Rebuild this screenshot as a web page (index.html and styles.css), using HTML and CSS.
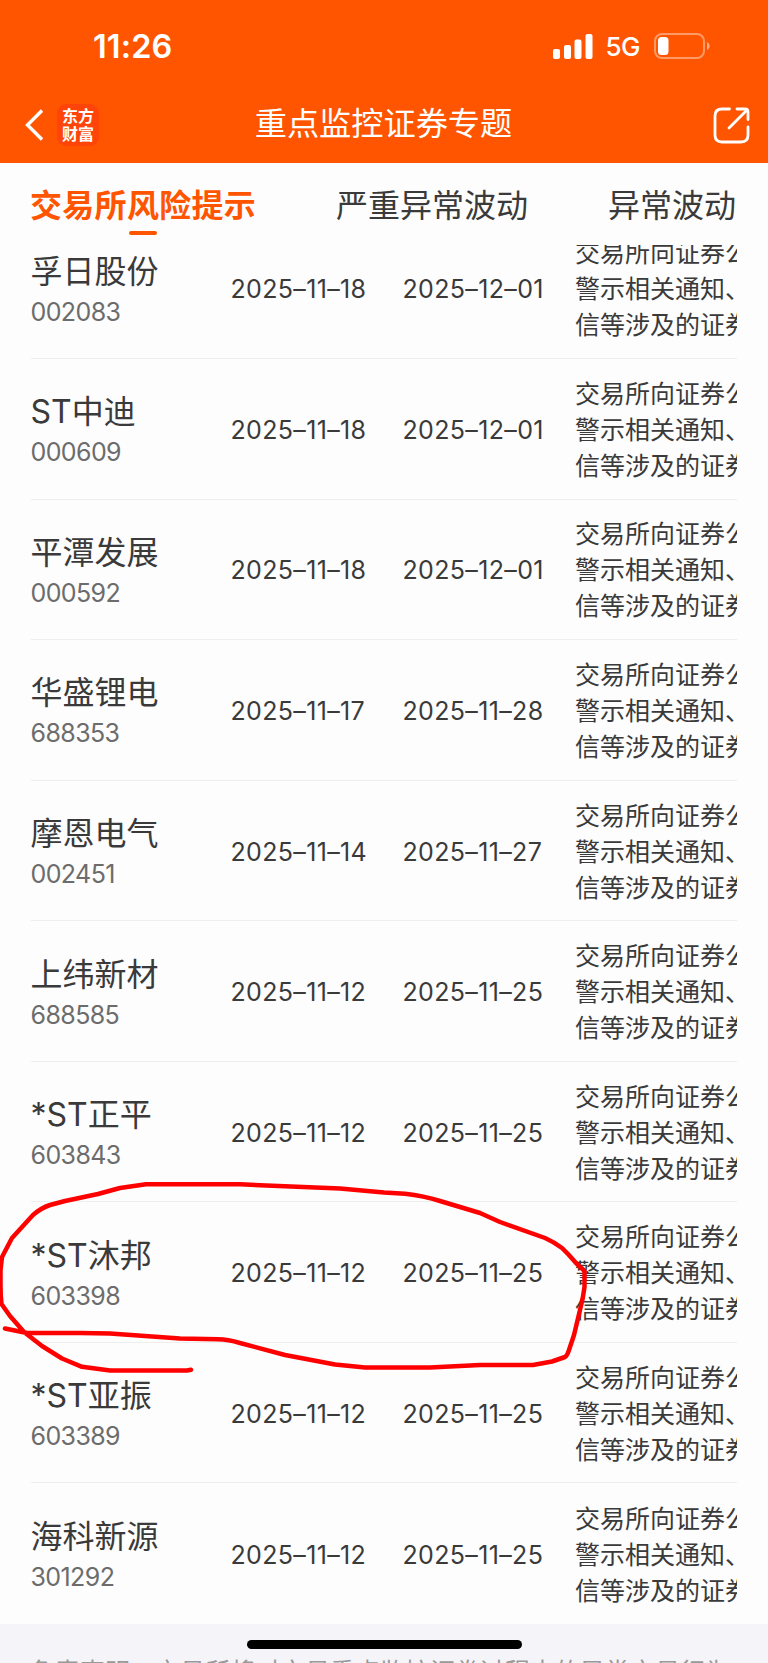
FILE: index.html
```
<!DOCTYPE html>
<html lang="zh-CN">
<head>
  <meta charset="UTF-8" />
  <meta name="viewport" content="width=device-width, initial-scale=1.0"/>
  <title>重点监控证券专题</title>
  <link rel="stylesheet" href="styles.css">
</head>
<body>
  <header class="header">
    <div class="status-bar">
      <span class="time">11:26</span>
      <div class="status-icons">
        <svg class="signal" width="40" height="25" viewBox="0 0 40 25" fill="#fff">
          <rect x="0" y="15" width="7" height="10" rx="2"/>
          <rect x="11" y="11" width="7" height="14" rx="2"/>
          <rect x="21.5" y="5.5" width="7" height="19.5" rx="2"/>
          <rect x="32.5" y="0" width="7" height="25" rx="2"/>
        </svg>
        <span class="network">5G</span>
        <svg class="battery" width="56" height="26" viewBox="0 0 56 26">
          <rect x="1" y="1" width="49" height="24" rx="7" fill="none" stroke="#fff" stroke-opacity=".4" stroke-width="2"/>
          <rect x="4" y="4" width="10.5" height="18" rx="3.5" fill="#fff"/>
          <path d="M53 9 C56.500 10.500 56.500 15.500 53 17 Z" fill="#fff" fill-opacity=".5"/>
        </svg>
      </div>
    </div>
    <div class="nav-bar">
      <div class="nav-left">
        <svg width="18" height="32" viewBox="0 0 18 32" fill="none" stroke="#fff" stroke-width="3.4">
          <path d="M17 1.500 L2.500 16 L17 30.500"/>
        </svg>
        <div class="logo"><span>东方</span><span>财富</span></div>
      </div>
      <h1>重点监控证券专题</h1>
      <svg class="share" width="37" height="37" viewBox="0 0 37 37" fill="none" stroke="#fff" stroke-width="2.800" stroke-linecap="round" stroke-linejoin="round">
        <path d="M16.500 2 H9 Q2 2 2 9 V28 Q2 35 9 35 H28 Q35 35 35 28 V20"/>
        <path d="M24 2 H32 Q35 2 35 5 V12.500"/>
        <path d="M16 21 L33.500 3.500"/>
      </svg>
    </div>
  </header>

  <nav class="tabs">
    <div class="tab active">交易所风险提示</div>
    <div class="tab">严重异常波动</div>
    <div class="tab">异常波动</div>
  </nav>

  <main class="list">
    <div class="rows" id="rows"></div>
  </main>

  <footer class="footer">
    <p>免责声明：交易所将对交易重点监控证券过程中的异常交易行为</p>
    <div class="home-indicator"></div>
  </footer>

  <svg class="marker" width="768" height="1663" viewBox="0 0 768 1663">
    <path d="M191 1369.700 L187 1370.500 H110 L82 1366.800 L62 1358.500 L42 1346 L24 1332 L10 1316 L1.500 1304 Q.5 1295 .5 1285 V1270 L2 1257 L12 1238 L33 1215 Q41 1208 50 1205 L65 1201 L98 1194 L120 1188 L146 1184.300 H240 L340 1188.500 L384 1192.500 L405 1193.800 Q424 1196 440 1201 L480 1213 L500 1222 L545 1238 Q554 1242 562 1248 L568 1254 L576 1263 L584.500 1271 V1287 Q583 1299 580 1310 L574 1335 L569 1350 Q567 1356 565 1357 L552 1361.500 L533 1365 H480 L430 1367.500 H365 L335 1364.500 L285 1355 L240 1343 Q228 1339.500 218 1339.300 L180 1338.500 L110 1333.500 L80 1333 H27 L5 1328.500"/>
  </svg>

  <script>
    const stocks = [
      ['孚日股份', '002083', '2025–11–18', '2025–12–01'],
      ['ST中迪', '000609', '2025–11–18', '2025–12–01'],
      ['平潭发展', '000592', '2025–11–18', '2025–12–01'],
      ['华盛锂电', '688353', '2025–11–17', '2025–11–28'],
      ['摩恩电气', '002451', '2025–11–14', '2025–11–27'],
      ['上纬新材', '688585', '2025–11–12', '2025–11–25'],
      ['*ST正平', '603843', '2025–11–12', '2025–11–25'],
      ['*ST沐邦', '603398', '2025–11–12', '2025–11–25'],
      ['*ST亚振', '603389', '2025–11–12', '2025–11–25'],
      ['海科新源', '301292', '2025–11–12', '2025–11–25']
    ];

    document.getElementById('rows').innerHTML = stocks.map(([name, code, start, end]) => `
      <div class="row">
        <div class="stock">
          <div class="name">${name}</div>
          <div class="code">${code}</div>
        </div>
        <div class="date">${start}</div>
        <div class="date">${end}</div>
        <div class="note">交易所向证券公<br>警示相关通知、<br>信等涉及的证券</div>
      </div>
    `).join('');
  </script>
</body>
</html>
```
FILE: styles.css
```
* { box-sizing: border-box; }

body {
  font-family: Inter, "Noto Sans CJK SC", sans-serif;
  background: #fdfdfd;
  color: #3a3a3a;
  margin: 0;
  width: 768px;
  height: 1663px;
  overflow: hidden;
  position: relative;
  display: flex;
  flex-direction: column;
}

.header {
  background: #ff5500;
  color: white;
  height: 163px;
  flex: none;
}

.status-bar {
  height: 90px;
  padding: 2px 58px 0 93px;
  display: flex;
  justify-content: space-between;
  align-items: center;
}

.time {
  font-size: 32.500px;
  font-weight: 600;
  letter-spacing: 0.1px;
}

.status-icons {
  display: flex;
  align-items: center;
}

.network {
  font-size: 26px;
  font-weight: 500;
  letter-spacing: -0.5px;
  margin: 1px 14px 0 12px;
}

.nav-bar {
  height: 70px;
  padding: 0 26px 0 25px;
  display: grid;
  grid-template-columns: 1fr auto 1fr;
  align-items: center;
}

.nav-left {
  display: flex;
  align-items: center;
  gap: 14px;
}

.logo {
  width: 42px;
  height: 42px;
  border-radius: 9px;
  background: #ff4409;
  display: flex;
  flex-direction: column;
  justify-content: center;
  align-items: center;
  font-size: 16px;
  font-weight: 700;
  line-height: 18px;
}

h1 {
  margin: -2px 0 0;
  font-size: 32.200px;
  font-weight: 400;
  line-height: 40px;
}

.share {
  justify-self: end;
  margin-right: -8px;
}

.tabs {
  flex: none;
  height: 82px;
  padding: 19px 32px 0 30px;
  display: flex;
  justify-content: space-between;
}

.tab {
  font-size: 32px;
  line-height: 48px;
}

.tab.active {
  color: #ff5500;
  font-weight: 700;
  letter-spacing: 0.3px;
}

.tab.active::after {
  content: "";
  display: block;
  width: 28px;
  height: 4px;
  border-radius: 2px;
  margin: 1px auto 0;
  background: #ff5500;
}

.list {
  flex: none;
  height: 1379px;
  padding: 0 31px 0 30.500px;
  overflow: hidden;
}

/* list is scrolled a little, first row is cut by the tabs */
.rows { margin-top: -26.400px; }

.row {
  height: 140.540px;
  padding-top: 2px;
  border-bottom: 1.500px solid #eee;
  display: grid;
  grid-template-columns: 200px 172px 172.500px 1fr;
  align-items: center;
}

.row:last-child { border-bottom: none; }

.name {
  font-size: 32px;
  line-height: 46px;
}

.code {
  margin-top: -1px;
  font-size: 25px;
  line-height: 36px;
  color: #6c6c6c;
  letter-spacing: -0.6px;
}

.date {
  font-size: 25px;
  letter-spacing: 0.35px;
}

.note {
  font-size: 25px;
  line-height: 36px;
  white-space: nowrap;
  overflow: hidden;
}

.footer {
  flex: 1;
  background: #f5f5f9;
  overflow: hidden;
  position: relative;
}

.footer p {
  margin: 30px 0 0 30px;
  font-size: 25px;
  line-height: 36px;
  color: #999;
  white-space: nowrap;
}

.home-indicator {
  position: absolute;
  left: 247px;
  top: 15.500px;
  width: 275px;
  height: 9px;
  border-radius: 5px;
  background: #000;
}

/* hand-drawn circle over the list */
.marker {
  position: absolute;
  left: 0;
  top: 0;
  fill: none;
  stroke: #ff0000;
  stroke-width: 4.500;
  stroke-linecap: round;
  stroke-linejoin: round;
  pointer-events: none;
}
```
